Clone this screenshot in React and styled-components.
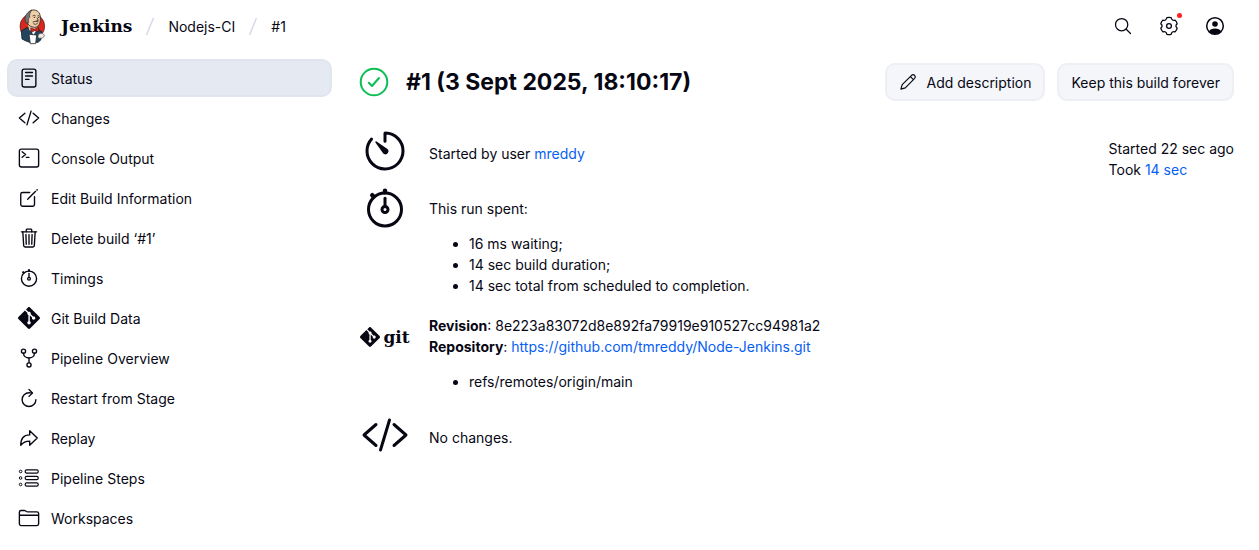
import React from "react";
import styled, { createGlobalStyle } from "styled-components";
import {
  IoArrowRedoOutline,
  IoCodeSlashOutline,
  IoCreateOutline,
  IoFolderOutline,
  IoGitNetworkOutline,
  IoReaderOutline,
  IoRefreshOutline,
  IoSearchOutline,
  IoStopwatchOutline,
  IoTerminalOutline,
  IoTimerOutline,
  IoTrashOutline,
} from "react-icons/io5";
import { SiGit } from "react-icons/si";

const GlobalStyle = createGlobalStyle`
  * { box-sizing: border-box; }
  body {
    margin: 0;
    background: #fff;
    color: #070714;
    font-family: Inter, "Liberation Sans", sans-serif;
    font-size: 14px;
    line-height: 21px;
  }
`;

const Link = styled.a`
  color: #0760f2;
  text-decoration: none;
`;

const Header = styled.header`
  display: flex;
  align-items: center;
  justify-content: space-between;
  height: 53px;
  padding: 0 34px 0 18px;
`;

const Crumbs = styled.nav`
  display: flex;
  align-items: center;
  gap: 13px;
`;

const Brand = styled.a`
  display: flex;
  align-items: center;
  gap: 14px;
  color: inherit;
  font-family: "DejaVu Serif", serif;
  font-size: 17px;
  font-weight: 700;
  text-decoration: none;
`;

const Crumb = styled.a`
  color: inherit;
  text-decoration: none;
`;

const Tools = styled.div`
  display: flex;
  gap: 26px;
  padding-bottom: 2px;
`;

const ToolButton = styled.button`
  position: relative;
  display: grid;
  place-items: center;
  width: 20px;
  height: 20px;
  padding: 0;
  border: 0;
  background: none;
  color: inherit;
`;

const Dot = styled.span`
  position: absolute;
  top: -3px;
  right: -3px;
  width: 5px;
  height: 5px;
  border-radius: 50%;
  background: #ff1f1f;
`;

const Page = styled.div`
  display: grid;
  grid-template-columns: 325px minmax(0, 1fr);
  gap: 27px;
  padding: 6px 25px 12px 7px;
`;

const TaskList = styled.nav`
  display: flex;
  flex-direction: column;
  gap: 2px;
`;

const Task = styled.a`
  display: flex;
  align-items: center;
  gap: 11px;
  height: 38px;
  padding: 0 9px;
  border: 2px solid ${(p) => (p.$active ? "#e1e6ee" : "transparent")};
  border-radius: 10px;
  background: ${(p) => (p.$active ? "#e5e9f2" : "transparent")};
  color: inherit;
  text-decoration: none;
`;

const Main = styled.main`
  padding-top: 4px;
`;

const TitleBar = styled.div`
  display: flex;
  align-items: center;
  justify-content: space-between;
`;

const Title = styled.h1`
  display: flex;
  align-items: center;
  gap: 17px;
  margin: 0;
  font-size: 23px;
  font-weight: 700;
`;

const Actions = styled.div`
  display: flex;
  gap: 12px;
`;

const Button = styled.button`
  display: flex;
  align-items: center;
  gap: 10px;
  height: 38px;
  padding: 0 12px;
  border: 2px solid #eceff4;
  border-radius: 10px;
  background: #f4f6fa;
  color: inherit;
  font: inherit;
`;

const Columns = styled.div`
  display: flex;
  justify-content: space-between;
  padding-top: 26px;
`;

const Summary = styled.div`
  display: flex;
  flex-direction: column;
  gap: 9px;
`;

const Entry = styled.section`
  display: grid;
  grid-template-columns: 52px 1fr;
  gap: 18px;
`;

const EntryIcon = styled.div`
  display: flex;
  align-items: center;
  justify-content: center;
  height: 48px;
`;

const GitLogo = styled.span`
  display: flex;
  align-items: center;
  gap: 3px;
  padding-bottom: 4px;
  font-family: "DejaVu Serif", serif;
  font-size: 17px;
  font-weight: 700;
`;

const EntryBody = styled.div`
  padding-top: ${(p) => p.$top || 0}px;
`;

const List = styled.ul`
  margin: 14px 0 10px;
  padding-left: 40px;
`;

const Timing = styled.aside`
  padding-top: 11px;
`;

function JenkinsLogo() {
  return (
    <svg width="29" height="36" viewBox="0 0 87 108" aria-hidden="true">
      <ellipse cx="43" cy="52" rx="37" ry="38" fill="#d6281f" stroke="#5a1512" strokeWidth="2" />
      <path d="M26 56 L10 66 L12 90 L22 95 L34 100 L60 100 L69 92 L71 68 L58 58Z" fill="#25455c" stroke="#10212d" strokeWidth="2.5" />
      <path d="M30 48 L34 64 L48 66 L58 56 L58 44Z" fill="#e3c49c" />
      <path d="M36 58 L46 78 L54 66Z" fill="#fff" />
      <path d="M28 24 C28 10 37 2 48 3 C62 4 68 15 67 30 C67 44 61 55 50 55 C39 55 29 48 27 38Z" fill="#efcfa8" stroke="#2f2826" strokeWidth="2.5" />
      <path d="M24 42 C19 32 19 12 42 3 C36 9 34 16 35 25 L31 29 L31 42Z" fill="#77767a" stroke="#29292d" strokeWidth="2" />
      <path d="M44 21 Q49 17 53 21 M58 21 Q62 18 65 22 M57 26 L61 34 L55 35" fill="none" stroke="#2f2826" strokeWidth="2.5" />
      <path d="M44 39 Q54 35 62 39 M46 44 Q53 49 59 43" fill="none" stroke="#5b4136" strokeWidth="3" />
      <circle cx="49" cy="25" r="2" fill="#1f1f1f" />
      <circle cx="62" cy="25" r="2" fill="#1f1f1f" />
      <path d="M38 57 L49 61 L61 55 L63 68 L50 65 L40 70Z" fill="#d6281f" stroke="#5a1512" strokeWidth="2" />
      <path d="M33 76 L56 78 L53 104 L37 104Z" fill="#fff" stroke="#252b30" strokeWidth="2.5" />
      <path d="M60 80 C64 70 77 71 79 80 C78 88 66 89 60 86Z" fill="#f1ebe5" stroke="#44474b" strokeWidth="2" />
    </svg>
  );
}

function Slash() {
  return (
    <svg width="10" height="20" viewBox="0 0 10 20" aria-hidden="true">
      <path d="M8.5 1 L1.5 18" stroke="#d5dae8" strokeWidth="1.5" />
    </svg>
  );
}

function GearIcon() {
  return (
    <svg width="20" height="20" viewBox="0 0 20 20" fill="none" stroke="currentColor" strokeWidth="1.3" strokeLinejoin="round" aria-hidden="true">
      <path d="M7.9 1.7 Q10 1.1 12.1 1.7 Q12.9 5 16.1 4.1 Q17.7 5.6 18.2 7.8 Q15.6 10 18.2 12.2 Q17.7 14.4 16.1 15.9 Q12.9 15 12.1 18.3 Q10 18.9 7.9 18.3 Q7.1 15 3.9 15.9 Q2.3 14.4 1.8 12.2 Q4.4 10 1.8 7.8 Q2.3 5.6 3.9 4.1 Q7.1 5 7.9 1.7Z" />
      <circle cx="10" cy="10" r="2.4" />
    </svg>
  );
}

function UserIcon() {
  return (
    <svg width="20" height="20" viewBox="0 0 20 20" aria-hidden="true">
      <circle cx="10" cy="10" r="8.3" fill="none" stroke="currentColor" strokeWidth="1.5" />
      <circle cx="10" cy="8" r="2.8" fill="currentColor" />
      <path d="M4 15.6 C5 13 7 12.4 10 12.4 S15 13 16 15.6 A8.3 8.3 0 0 1 4 15.6Z" fill="currentColor" />
    </svg>
  );
}

function PencilIcon() {
  return (
    <svg width="18" height="18" viewBox="0 0 18 18" fill="none" stroke="currentColor" strokeWidth="1.2" strokeLinejoin="round" aria-hidden="true">
      <path d="M1.9 16.1 L3.2 11.7 L12.6 2.3 Q14.2 1 15.6 2.4 T15.7 5.4 L6.3 14.8Z" />
      <path d="M11.4 3.6 L14.4 6.6" />
    </svg>
  );
}

function StepsIcon({ size }) {
  return (
    <svg width={size} height={size} viewBox="0 0 22 22" fill="none" stroke="currentColor" aria-hidden="true">
      {[4.5, 11, 17.5].map((y) => (
        <g key={y}>
          <circle cx="2.6" cy={y} r="1.3" />
          <rect x="7.2" y={y - 1.6} width="13" height="3.2" rx="1.4" strokeWidth="1.2" />
        </g>
      ))}
    </svg>
  );
}

function SuccessIcon() {
  return (
    <svg width="30" height="30" viewBox="0 0 30 30" fill="none" stroke="#0bbf55" strokeWidth="2" strokeLinecap="round" strokeLinejoin="round" role="img" aria-label="Success">
      <circle cx="15" cy="15" r="13.3" />
      <path d="M9.8 15.8 L13 19 L20 11" />
    </svg>
  );
}

const tasks = [
  ["Status", IoReaderOutline],
  ["Changes", IoCodeSlashOutline],
  ["Console Output", IoTerminalOutline],
  ["Edit Build Information", IoCreateOutline],
  ["Delete build ‘#1’", IoTrashOutline],
  ["Timings", IoStopwatchOutline],
  ["Git Build Data", SiGit],
  ["Pipeline Overview", IoGitNetworkOutline],
  ["Restart from Stage", IoRefreshOutline],
  ["Replay", IoArrowRedoOutline],
  ["Pipeline Steps", StepsIcon],
  ["Workspaces", IoFolderOutline],
];

export default function App() {
  return (
    <>
      <GlobalStyle />
      <Header>
        <Crumbs aria-label="Breadcrumb">
          <Brand href="#">
            <JenkinsLogo />
            Jenkins
          </Brand>
          <Slash />
          <Crumb href="#">Nodejs-CI</Crumb>
          <Slash />
          <Crumb href="#">#1</Crumb>
        </Crumbs>
        <Tools>
          <ToolButton aria-label="Search">
            <IoSearchOutline size={20} />
          </ToolButton>
          <ToolButton aria-label="Manage Jenkins">
            <GearIcon />
            <Dot />
          </ToolButton>
          <ToolButton aria-label="User">
            <UserIcon />
          </ToolButton>
        </Tools>
      </Header>
      <Page>
        <TaskList aria-label="Build">
          {tasks.map(([label, Icon], i) => (
            <Task key={label} href="#" $active={i === 0}>
              <Icon size={22} />
              {label}
            </Task>
          ))}
        </TaskList>
        <Main>
          <TitleBar>
            <Title>
              <SuccessIcon />
              #1 (3 Sept 2025, 18:10:17)
            </Title>
            <Actions>
              <Button>
                <PencilIcon />
                Add description
              </Button>
              <Button>Keep this build forever</Button>
            </Actions>
          </TitleBar>
          <Columns>
            <Summary>
              <Entry>
                <EntryIcon>
                  <IoTimerOutline size={48} />
                </EntryIcon>
                <EntryBody $top={16}>
                  Started by user <Link href="#">mreddy</Link>
                </EntryBody>
              </Entry>
              <Entry>
                <EntryIcon>
                  <IoStopwatchOutline size={48} />
                </EntryIcon>
                <EntryBody $top={14}>
                  This run spent:
                  <List>
                    <li>16 ms waiting;</li>
                    <li>14 sec build duration;</li>
                    <li>14 sec total from scheduled to completion.</li>
                  </List>
                </EntryBody>
              </Entry>
              <Entry>
                <EntryIcon>
                  <GitLogo>
                    <SiGit size={20} />
                    git
                  </GitLogo>
                </EntryIcon>
                <EntryBody>
                  <b>Revision</b>: 8e223a83072d8e892fa79919e910527cc94981a2
                  <br />
                  <b>Repository</b>: <Link href="#">https://github.com/tmreddy/Node-Jenkins.git</Link>
                  <List>
                    <li>refs/remotes/origin/main</li>
                  </List>
                </EntryBody>
              </Entry>
              <Entry>
                <EntryIcon>
                  <IoCodeSlashOutline size={48} />
                </EntryIcon>
                <EntryBody $top={16}>No changes.</EntryBody>
              </Entry>
            </Summary>
            <Timing>
              Started 22 sec ago
              <br />
              Took <Link href="#">14 sec</Link>
            </Timing>
          </Columns>
        </Main>
      </Page>
    </>
  );
}
